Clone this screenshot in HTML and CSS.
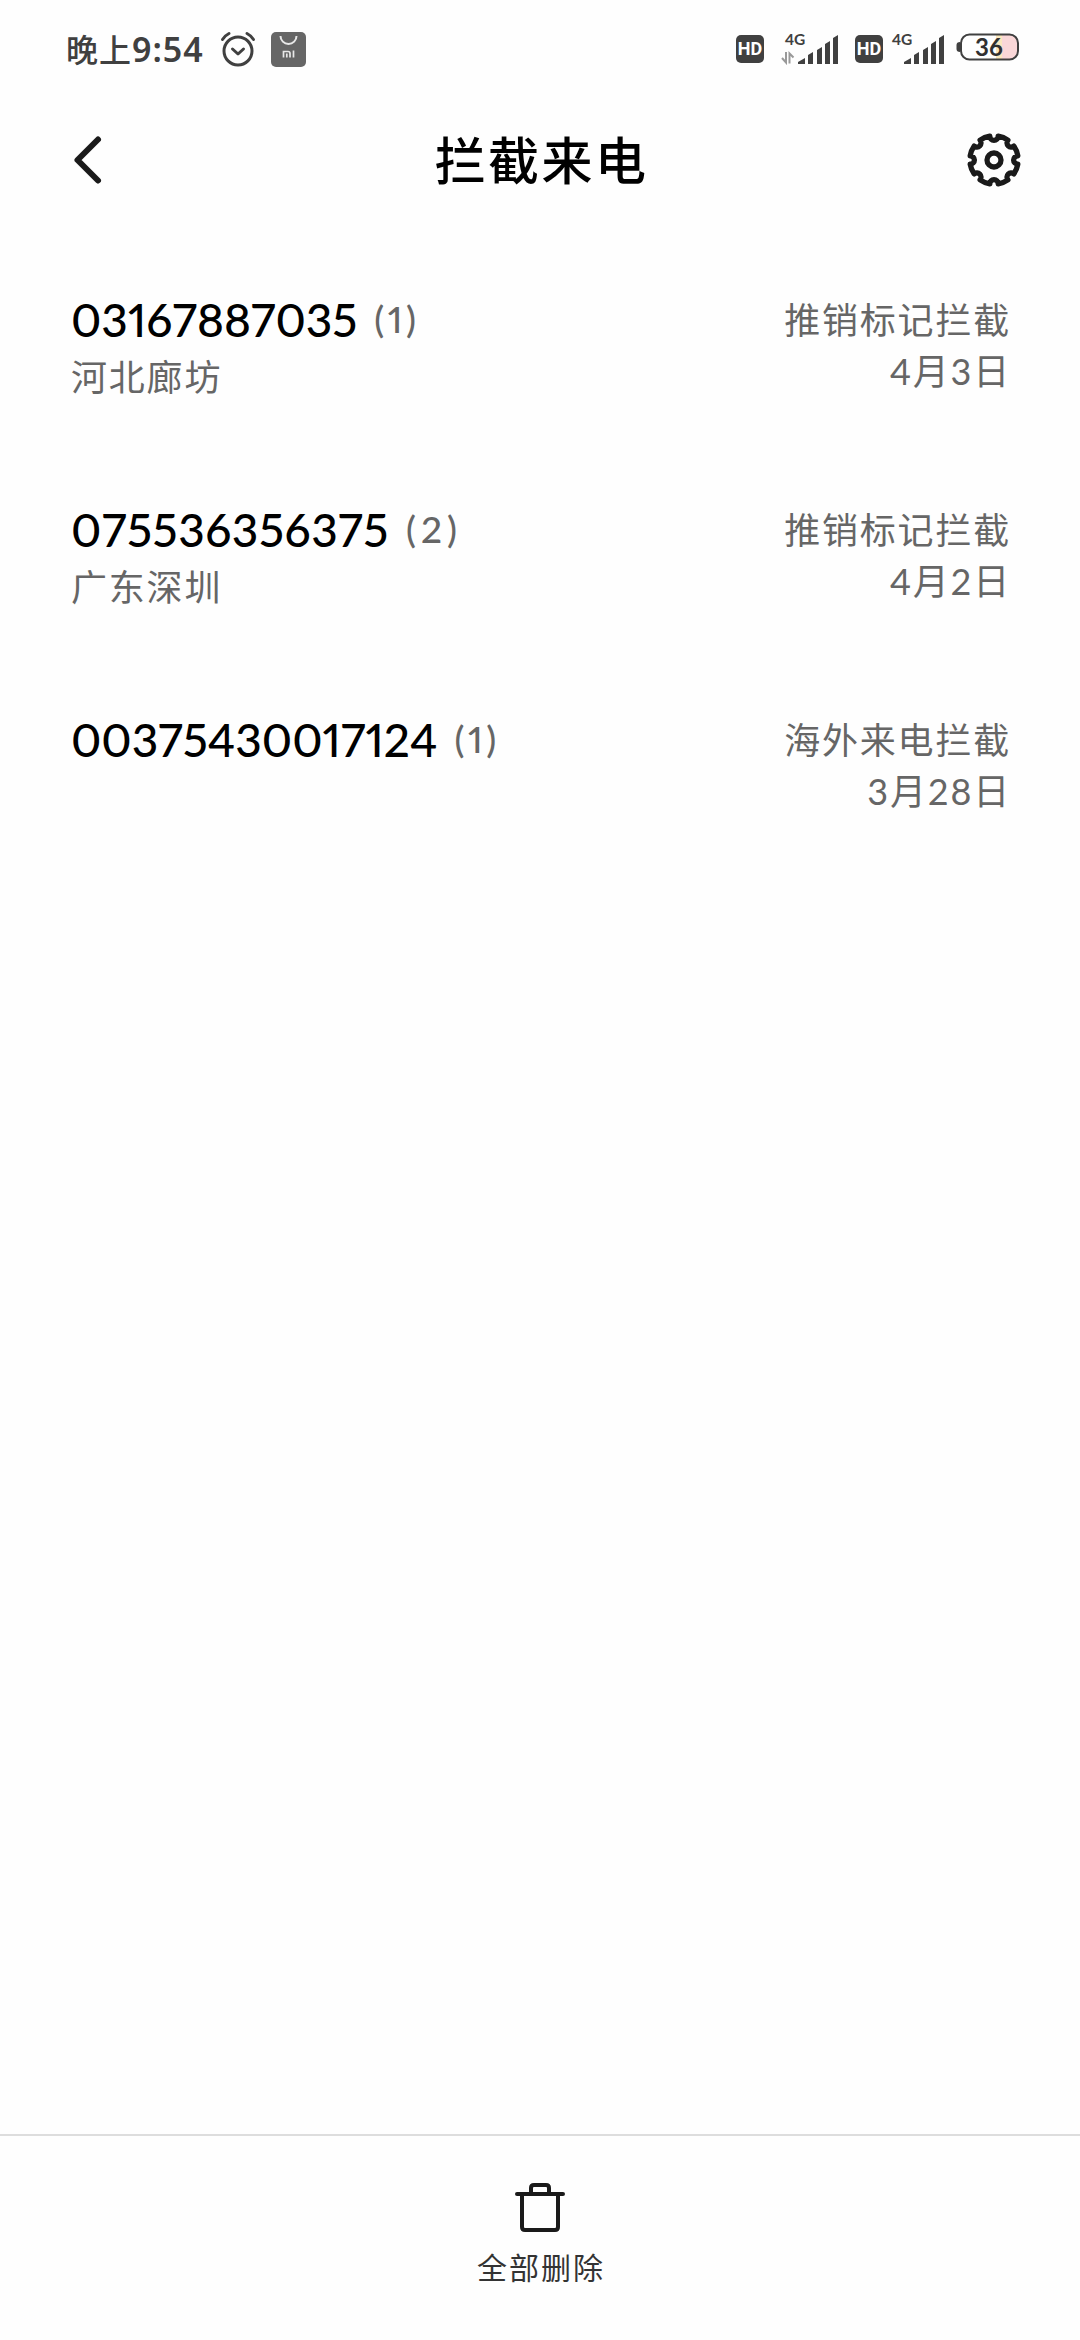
FILE: index.html
```html
<!DOCTYPE html>
<html lang="zh-CN">
<head>
    <meta charset="UTF-8">
    <meta name="viewport" content="width=device-width, initial-scale=1.0">
    <title>拦截来电</title>
    <link rel="stylesheet" href="styles.css">
</head>
<body>

    <div class="screen">
        <!-- Status bar -->
        <div class="status-bar">
            <div class="status-left">
                <span class="time">晚上<span class="clock">9:54</span></span>
                <svg class="alarm" width="36" height="36" viewBox="0 0 36 36" fill="none" stroke="#404040" stroke-width="3" stroke-linecap="round" stroke-linejoin="round">
                    <circle cx="18" cy="20" r="14"/>
                    <path d="M12.5 18l5.5 5 5.5-5"/>
                    <path d="M2.5 8.5Q5 4.500 9 2.500M33.500 8.500Q31 4.500 27 2.500"/>
                </svg>
                <svg class="store" width="35" height="35" viewBox="0 0 35 35" fill="none" stroke="#e8e8e8" stroke-width="2">
                    <rect width="35" height="35" rx="5" fill="#666" stroke="none"/>
                    <path d="M9.500 4a8 8 0 0 0 16 0"/>
                    <path d="M12.500 25.500v-6h4.500q2 0 2 2v4M15.800 21.500v4M22.500 18.500v7" stroke-width="1.700"/>
                </svg>
            </div>
            <div class="status-right">
                <span class="hd">HD</span>
                <svg class="signal" width="58" height="36" viewBox="0 -4 58 36">
                    <text x="4" y="11.500">4G</text>
                    <path d="M1 25l4 4.500V19M8.500 30.500V20.500l4 4" fill="none" stroke="#999" stroke-width="2"/>
                    <path class="bars" d="M17 31v-2l7-4v6zM27 31v-9l5-3v12zM36 31V17l5-3v17zM44 31V11l5-3v23zM52 31V5l5-3v29z"/>
                </svg>
                <span class="hd">HD</span>
                <svg class="signal second" width="54" height="36" viewBox="4 -4 54 36">
                    <text x="5" y="11.500">4G</text>
                    <path class="bars" d="M17 31v-2l7-4v6zM27 31v-9l5-3v12zM36 31V17l5-3v17zM44 31V11l5-3v23zM52 31V5l5-3v29z"/>
                </svg>
                <svg class="battery" width="64" height="28" viewBox="0 0 64 28">
                    <path d="M46 2h8q7 0 7 7v10q0 7-7 7h-8z" fill="#fad7d8"/>
                    <path d="M40 2h6v24h-6z" fill="#fbe8bd"/>
                    <rect x="5" y="1.500" width="57" height="25" rx="8.500" fill="none" stroke="#404040" stroke-width="2"/>
                    <path d="M4 9v10q-3.500 0-3.500-3v-4q0-3 3.500-3z" fill="#404040"/>
                    <text x="33" y="22.500" text-anchor="middle">36</text>
                </svg>
            </div>
        </div>

        <!-- Title bar -->
        <div class="header">
            <svg class="back" width="54" height="54" viewBox="0 0 54 54" fill="none" stroke="#1a1a1a" stroke-width="6" stroke-linecap="round" stroke-linejoin="round">
                <path d="M27 6.500L6.500 27 27 47.500"/>
            </svg>
            <h1>拦截来电</h1>
            <svg class="settings" width="54" height="54" viewBox="-27 -27 54 54" fill="none" stroke="#1a1a1a" stroke-width="5.300" stroke-linejoin="round">
                <path d="M4.200-23.800A24.200 24.200 0 0 1 13.900-19.800A4.200 4.200 0 0 0 19.800-13.900A24.200 24.200 0 0 1 23.800-4.200A4.200 4.200 0 0 0 23.800 4.200A24.200 24.200 0 0 1 19.800 13.900A4.200 4.200 0 0 0 13.900 19.800A24.200 24.200 0 0 1 4.200 23.800A4.200 4.200 0 0 0-4.200 23.800A24.200 24.200 0 0 1-13.900 19.800A4.200 4.200 0 0 0-19.800 13.900A24.200 24.200 0 0 1-23.800 4.200A4.200 4.200 0 0 0-23.800-4.200A24.200 24.200 0 0 1-19.800-13.900A4.200 4.200 0 0 0-13.900-19.800A24.200 24.200 0 0 1-4.200-23.800A4.200 4.200 0 0 0 4.200-23.800z"/>
                <circle r="7"/>
            </svg>
        </div>

        <!-- Blocked calls -->
        <div class="call-list">
            <div class="call">
                <div class="caller">
                    <div class="number">03167887035<span class="count">(1)</span></div>
                    <div class="place">河北廊坊</div>
                </div>
                <div class="info">
                    <div class="reason">推销标记拦截</div>
                    <div class="date">4月3日</div>
                </div>
            </div>
            <div class="call">
                <div class="caller">
                    <div class="number wide">075536356375<span class="count">(2)</span></div>
                    <div class="place">广东深圳</div>
                </div>
                <div class="info">
                    <div class="reason">推销标记拦截</div>
                    <div class="date">4月2日</div>
                </div>
            </div>
            <div class="call">
                <div class="caller">
                    <div class="number">00375430017124<span class="count">(1)</span></div>
                </div>
                <div class="info">
                    <div class="reason">海外来电拦截</div>
                    <div class="date">3月28日</div>
                </div>
            </div>
        </div>

        <!-- Bottom action -->
        <div class="footer">
            <svg width="50" height="50" viewBox="0 0 50 50" fill="none" stroke="#1a1a1a" stroke-width="4" stroke-linecap="round" stroke-linejoin="round">
                <path d="M2 11h46M7 11v33q0 3 3 3h30q3 0 3-3V11M16 11V5q0-3 3-3h12q3 0 3 3v6"/>
            </svg>
            <span class="delete-label">全部删除</span>
        </div>
    </div>

</body>
</html>
```
FILE: styles.css
```css
* {
    box-sizing: border-box;
}
body {
    font-family: Lato, "Noto Sans CJK SC", sans-serif;
    background-color: #fefefe;
    margin: 0;
}
svg {
    display: block;
    flex-shrink: 0;
}
.screen {
    display: flex;
    flex-direction: column;
    width: 1080px;
    height: 2340px;
}
.status-bar {
    display: flex;
    justify-content: space-between;
    height: 98px;
    padding: 0 60px 0 66px;
    color: #404040;
}
.status-left, .status-right {
    display: flex;
    align-items: center;
}
.time {
    font-size: 32px;
    font-weight: 500;
    letter-spacing: 1px;
    line-height: 98px;
    white-space: nowrap;
}
.clock {
    font-family: "Noto Sans", sans-serif;
    font-size: 34px;
    font-weight: 600;
}
.alarm {
    margin-left: 16px;
}
.store {
    margin-left: 15px;
}
.hd {
    width: 28px;
    height: 28px;
    border-radius: 5px;
    background: #404040;
    color: white;
    font: bold 18px/28px Roboto, sans-serif;
    text-align: center;
}
.signal {
    margin: -4px 16px 0 17px;
}
.signal.second {
    margin: -4px 11px 0 8px;
}
.signal text {
    font: bold 15.5px Lato, sans-serif;
    fill: #404040;
}
.bars {
    fill: #404040;
}
.battery {
    margin-top: -4px;
}
.battery text {
    font: bold 24px Lato, sans-serif;
    fill: #303030;
}
.header {
    display: flex;
    justify-content: space-between;
    align-items: center;
    height: 124px;
    padding: 0 60px 0 71px;
}
h1 {
    margin: 2px 9px 0 0;
    color: black;
    font-size: 51px;
    font-weight: 500;
    letter-spacing: 2.4px;
    line-height: 72px;
}
.settings {
    margin-right: -1px;
}
.call-list {
    flex: 1;
    padding: 67px 69px 0 71px;
}
.call {
    display: flex;
    justify-content: space-between;
    height: 210px;
    color: #666;
    font-size: 36px;
    letter-spacing: 1.8px;
}
.number {
    height: 62px;
    color: black;
    font-size: 46px;
    font-weight: 500;
    font-feature-settings: "pnum";
    font-kerning: none;
    letter-spacing: 0;
    line-height: 62px;
}
.number.wide {
    letter-spacing: 0.55px;
}
.count {
    margin-left: 17px;
    color: #666;
    font-size: 37px;
    letter-spacing: 3.5px;
    line-height: 40px;
    vertical-align: 4px;
}
.wide .count {
    letter-spacing: 5px;
}
.place {
    padding-top: 1px;
    line-height: 50px;
}
.info {
    padding-top: 6px;
    text-align: right;
}
.reason, .date {
    line-height: 51px;
}
.footer {
    display: flex;
    flex-direction: column;
    align-items: center;
    height: 206px;
    padding-top: 47px;
    border-top: 2px solid #ddd;
}
.delete-label {
    margin: 12px 0 0 2px;
    color: #333;
    font-size: 30px;
    letter-spacing: 2px;
    line-height: 44px;
}
```
